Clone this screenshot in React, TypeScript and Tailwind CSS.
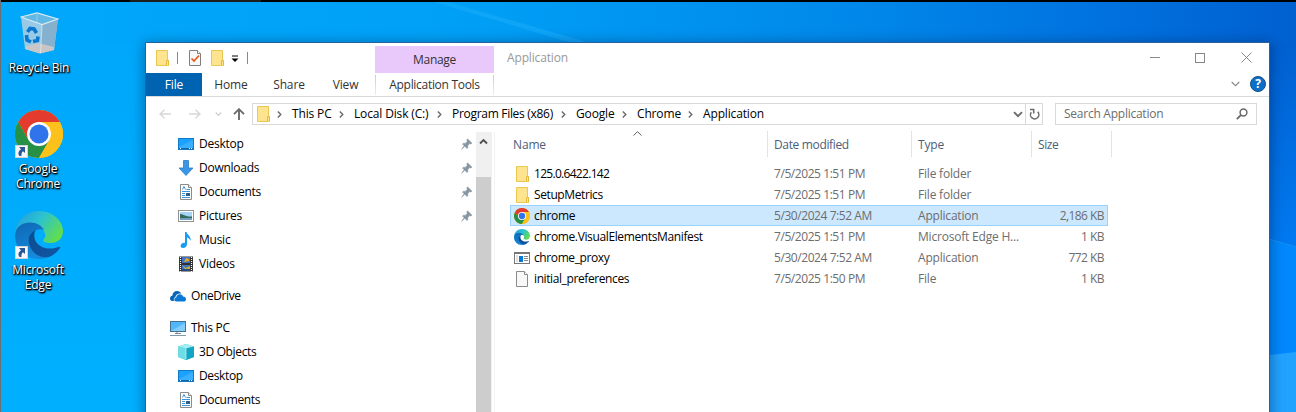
import React from 'react';

type P = { className?: string };

const Chrome = ({ className = '' }: P) => (
  <svg viewBox="0 0 48 48" className={className}>
    <circle cx="24" cy="24" r="24" fill="#fbbc09" />
    <path d="M24 0A24 24 0 0 1 44.8 12H24L13.6 30L3.2 12A24 24 0 0 1 24 0Z" fill="#e33b2e" />
    <path d="M3.2 12A24 24 0 0 0 24 48L34.4 30L24 24L13.6 30Z" fill="#269146" />
    <path d="M44.8 12H24L34.4 30L24 48A24 24 0 0 0 44.8 12Z" fill="#fcc21b" />
    <circle cx="24" cy="24" r="12" fill="#fff" />
    <circle cx="24" cy="24" r="9.5" fill="#2f74ea" />
  </svg>
);

const Edge = ({ className = '' }: P) => (
  <svg viewBox="0 0 48 48" className={className}>
    <defs>
      <linearGradient id="eg1" x1="0" y1="0.2" x2="1" y2="0.7">
        <stop offset="0" stopColor="#249fdf" />
        <stop offset=".45" stopColor="#2cc3d0" />
        <stop offset="1" stopColor="#65df45" />
      </linearGradient>
      <linearGradient id="eg2" x1="0" y1="0" x2=".4" y2="1">
        <stop offset="0" stopColor="#0d68b5" />
        <stop offset="1" stopColor="#1689dc" />
      </linearGradient>
      <linearGradient id="eg3" x1="0" y1="0" x2="1" y2="1">
        <stop offset="0" stopColor="#0b4c8f" />
        <stop offset="1" stopColor="#1257a5" />
      </linearGradient>
    </defs>
    <path d="M0 23C1 9 11 0 24 0C38 0 48 10 48 20C48 28 42 32 36 32C31 32 27 31 28.500 28.500C31 26 31 22 27 18C20 9 4 11 0 23Z" fill="url(#eg1)" />
    <path d="M0 24C1 15 8 11.500 15 11.500C22 11.500 27 15 29 19C20 16 13 24 16 33C19 42 28 45 35 45C31 47.500 27 48 24 48C10 48 0 38 0 24Z" fill="url(#eg2)" />
    <path d="M21 19C12 23 12 32 17 39C22 46 29 47 34 46C39 44 43 40 45 37C45.500 35.500 44.500 35.500 43 36C33 40 23 36 20 29C19 25 19 21 21 19Z" fill="url(#eg3)" />
  </svg>
);

const Bin = ({ className = '' }: P) => (
  <svg viewBox="0 0 39 42" className={className}>
    <path d="M1 5L5 37L20 41.500L34 38L38 7L22 13Z" fill="#a9cde2" fillOpacity=".9" />
    <path d="M22 13L38 7L34 38L20 41.500Z" fill="#85b1ce" />
    <path d="M5 35L18 31L34 35L34 38L20 41.500L5 37Z" fill="#c9c6c8" />
    <path d="M1 5L17 .8L38 7L22 12.500Z" fill="#62b8e5" stroke="#dbeaf2" strokeWidth="1.200" />
    <path d="M17 1V10" stroke="#8fcbe9" />
    <path d="M22 13L20.500 41" stroke="#dbe9f0" strokeWidth=".8" />
    <path d="M7.500 20L10 16.500L14 17L16.500 21" fill="none" stroke="#0878d0" strokeWidth="3.600" />
    <path d="M6.500 23L7 28L11 30" fill="none" stroke="#0878d0" strokeWidth="3.600" />
    <path d="M13 29.500L17.500 28.500L18 24.500" fill="none" stroke="#0878d0" strokeWidth="3.600" />
  </svg>
);

const Shortcut = () => (
  <svg viewBox="0 0 13 13" className="absolute bottom-0 left-0 h-[13px] w-[13px]">
    <rect x=".5" y=".5" width="12" height="12" fill="#f5f7fa" stroke="#d0d4d8" />
    <path d="M4 2H10V8L8 6.200C6.500 7.500 6.300 9 6.500 11H4.500C2.500 8.500 3.500 6 6 4.200Z" fill="#2a5699" />
  </svg>
);

const Folder = ({ className = 'h-4 w-4' }: P) => (
  <svg viewBox="0 0 16 16" className={className}>
    <path d="M2.500 .5H13.500V10.500H14.500V15.500H2.500Z" fill="#ffe48f" stroke="#ebc84f" />
    <path d="M12.500 15V10.500H14.500V15.500" fill="#ffe793" stroke="#e3bb3c" />
  </svg>
);

const DesktopI = () => (
  <svg viewBox="0 0 16 16" className="h-4 w-4">
    <rect x=".5" y="2.500" width="15" height="11" fill="#1ca2fb" stroke="#1279c6" />
    <path d="M1 11L15 4V12H1Z" fill="#39b0ff" />
    <path d="M1 12.500H15" stroke="#0d66aa" />
    <path d="M2 12.500H3M11 12.500H12M13 12.500H14" stroke="#fff" />
  </svg>
);
const DownI = () => (
  <svg viewBox="0 0 16 16" className="h-4 w-4">
    <path d="M5.500 .5H10.500V8H15L8 15.500L1 8H5.500Z" fill="#3b96e6" stroke="#267fca" strokeWidth=".8" />
  </svg>
);
const DocI = () => (
  <svg viewBox="0 0 16 16" className="h-4 w-4">
    <path d="M2.500 .5H10.500L13.500 3.500V15.500H2.500Z" fill="#fff" stroke="#8b8b8b" />
    <path d="M10.500 .5V3.500H13.500" fill="#eee" stroke="#8b8b8b" />
    <path d="M4.500 5.500L6 2.500L7.500 5.500M8.500 5.500H12M4 7.500H12M4 9.500H7M4 11.500H7M4 13.500H12" fill="none" stroke="#3b97d9" />
    <rect x="8" y="9" width="4" height="3" fill="#315f88" />
  </svg>
);
const PicI = () => (
  <svg viewBox="0 0 16 16" className="h-4 w-4">
    <rect x=".5" y="2.500" width="15" height="11" fill="#fff" stroke="#919191" />
    <rect x="2" y="4" width="12" height="8" fill="#a7d3f6" />
    <path d="M2 6C5 6 8 9 14 8.500V12H2Z" fill="#34695f" />
    <path d="M2 10H14V12H2Z" fill="#6e9ebb" />
  </svg>
);
const MusicI = () => (
  <svg viewBox="0 0 16 16" className="h-4 w-4">
    <path d="M7 0H8.500C9 3 13.500 4 12.500 9C12 7 10.500 6 9 5.500V12C9 14.500 7 16 5 16C3.300 16 2.300 14.800 2.700 13.300C3.200 11.500 5.200 10.500 7 11Z" fill="#169df0" />
  </svg>
);
const VideoI = () => (
  <svg viewBox="0 0 16 16" className="h-4 w-4">
    <rect x="1" y=".5" width="14" height="15" fill="#303030" />
    <path d="M2.500 1V16M13.500 1V16" stroke="#fff" strokeWidth="1.200" strokeDasharray="1 1" />
    <rect x="4" y="1" width="8" height="6" fill="#3e75c5" />
    <path d="M6 6L8 2L11 3V5Z" fill="#e7a51c" />
    <rect x="4" y="9" width="8" height="6" fill="#3e75c5" />
    <path d="M4 9L8 12L12 10V13H7Z" fill="#d0aa34" />
    <path d="M4 13H12V15H4Z" fill="#244c7f" />
  </svg>
);
const OneI = () => (
  <svg viewBox="0 0 16 16" className="h-4 w-4">
    <path d="M2.500 13C.8 13 0 11.800 0 10.500C0 9 1 8 2.300 7.800C2.500 5 4.500 3 7 3C9 3 10.500 4 11.300 5.500H10C7.500 5.500 5.800 7 5.400 9C3.800 9.500 3.300 11.500 4.200 13Z" fill="#0a64b4" />
    <path d="M6.500 13.500C4.800 13.500 4.300 12.500 4.300 11.600C4.300 10.400 5.200 9.600 6.300 9.500C6.300 7.500 7.800 6.200 9.700 6.200C11.300 6.200 12.500 7 13 8.500C14.800 8.500 16 9.700 16 11.200C16 12.600 15 13.500 13.500 13.500Z" fill="#0878d4" />
  </svg>
);
const PcI = () => (
  <svg viewBox="0 0 16 16" className="h-4 w-4">
    <rect x=".5" y="1.500" width="15" height="10" fill="#4fb7fa" stroke="#49718c" />
    <path d="M1 11L15 3V11Z" fill="#83cdfc" />
    <path d="M7 12V13.500M5 13.500H11" stroke="#789" />
    <path d="M0 15.500H16" stroke="#8499a7" />
  </svg>
);
const CubeI = () => (
  <svg viewBox="0 0 16 16" className="h-4 w-4">
    <path d="M0 2.500L8 0L16 2.500V13L8 16L0 13Z" fill="#35bdd2" />
    <path d="M0 2.500L8 0L16 2.500L8 4.500Z" fill="#a5eef2" />
    <path d="M0 2.500L8 4.500V16L0 13Z" fill="#6fdce4" />
    <path d="M8 4.500L16 2.500V13L8 16Z" fill="#12a5c4" />
    <path d="M8 4V15" stroke="#c6f6f7" strokeWidth=".7" />
  </svg>
);
const PinI = () => (
  <svg viewBox="0 0 12 12" className="mr-[3px] h-3 w-3">
    <path d="M6.500 .8L11 5.200L9.800 6L8.800 5.600L6.700 7.700L7 9.700L6 10.500L3.800 8.200L.5 11.500L3.100 7.700L1.500 6L2.300 5.200L4.300 5.400L6.300 3.200L5.800 2Z" fill="#8796a3" stroke="#8796a3" strokeWidth=".5" />
  </svg>
);
const ProxyI = () => (
  <svg viewBox="0 0 16 16" className="h-4 w-4">
    <rect x=".5" y="2.500" width="15" height="11" fill="#fff" stroke="#777" />
    <path d="M0 3H16" stroke="#777" strokeWidth="2" />
    <rect x="2" y="5" width="2" height="7" fill="#e1e1e1" />
    <rect x="5" y="6" width="4" height="6" fill="#0878d7" />
    <path d="M10 6.500H14M10 8.500H14M10 10.500H14" stroke="#888" />
  </svg>
);
const FileI = () => (
  <svg viewBox="0 0 16 16" className="h-4 w-4">
    <path d="M2.500 .5H10.500L13.500 3.500V15.500H2.500Z" fill="#f8f8f8" stroke="#8b8b8b" />
    <path d="M10.500 .5V3.500H13.500" fill="#fff" stroke="#8b8b8b" />
  </svg>
);
const CheckI = () => (
  <svg viewBox="0 0 16 16" className="h-4 w-4">
    <path d="M2.500 .5H10.500L13.500 3.500V15.500H2.500Z" fill="#f8f8f8" stroke="#808080" />
    <path d="M10.500 .5V3.500H13.500" fill="#fff" stroke="#808080" />
    <path d="M4.500 8.500L7 11L12 5.500" fill="none" stroke="#e8581c" strokeWidth="1.700" />
  </svg>
);

const Crumb = ({ text, w }: { text: string; w: string }) => (
  <span className={`flex shrink-0 items-center ${w}`}>
    <svg viewBox="0 0 5 7" className="mr-[10px] h-[7px] w-[5px] shrink-0"><path d="M.8 .5L3.800 3.500L.8 6.500" fill="none" stroke="#6b6b6b" strokeWidth="1.400" /></svg>
    {text}
  </span>
);

const crumbs = [
  ['This PC', 'w-[62px]'],
  ['Local Disk (C:)', 'w-[98px]'],
  ['Program Files (x86)', 'w-[124px] tracking-[-0.3px]'],
  ['Google', 'w-[61px]'],
  ['Chrome', 'w-[66px]'],
  ['Application', 'w-[90px]'],
];

const quick = [
  { n: 'Desktop', i: <DesktopI />, pin: true },
  { n: 'Downloads', i: <DownI />, pin: true },
  { n: 'Documents', i: <DocI />, pin: true },
  { n: 'Pictures', i: <PicI />, pin: true },
  { n: 'Music', i: <MusicI />, pin: false },
  { n: 'Videos', i: <VideoI />, pin: false },
];
const pc = [
  { n: '3D Objects', i: <CubeI /> },
  { n: 'Desktop', i: <DesktopI /> },
  { n: 'Documents', i: <DocI /> },
];

const files = [
  { n: '125.0.6422.142', k: 'tracking-[-0.7px]', d: '7/5/2025 1:51 PM', t: 'File folder', s: '', i: <Folder /> },
  { n: 'SetupMetrics', k: 'tracking-[-0.4px]', d: '7/5/2025 1:51 PM', t: 'File folder', s: '', i: <Folder /> },
  { n: 'chrome', k: 'tracking-[-0.3px]', d: '5/30/2024 7:52 AM', t: 'Application', s: '2,186 KB', i: <Chrome className="h-4 w-4" />, sel: true },
  { n: 'chrome.VisualElementsManifest', k: 'tracking-[-0.37px]', d: '7/5/2025 1:51 PM', t: 'Microsoft Edge H...', s: '1 KB', i: <Edge className="h-4 w-4" /> },
  { n: 'chrome_proxy', k: 'tracking-[-0.4px]', d: '5/30/2024 7:52 AM', t: 'Application', s: '772 KB', i: <ProxyI /> },
  { n: 'initial_preferences', k: 'tracking-[-0.4px]', d: '7/5/2025 1:50 PM', t: 'File', s: '1 KB', i: <FileI /> },
];

const Wallpaper = () => (
  <svg viewBox="0 0 1296 412" className="absolute inset-0 h-[412px] w-[1296px]">
    <defs>
      <linearGradient id="sky" x1="0" x2="1" y1="0" y2="0">
        <stop offset="0" stopColor="#00a8fb" />
        <stop offset=".35" stopColor="#00a0f6" />
        <stop offset=".65" stopColor="#0089ea" />
        <stop offset=".85" stopColor="#0072df" />
        <stop offset="1" stopColor="#0060d0" />
      </linearGradient>
      <linearGradient id="left" x1="0" x2="0" y1="0" y2="1">
        <stop offset="0" stopColor="#00a7fa" />
        <stop offset="1" stopColor="#00b0ff" />
      </linearGradient>
      <linearGradient id="right" x1="0" x2="0" y1="0" y2="1">
        <stop offset="0" stopColor="#0060d0" />
        <stop offset="1" stopColor="#007af1" />
      </linearGradient>
      <linearGradient id="beam" x1="0" x2="1" y1="0" y2="0">
        <stop offset="0" stopColor="#1eb0fb" stopOpacity=".4" />
        <stop offset="1" stopColor="#1eaefb" stopOpacity=".5" />
      </linearGradient>
    </defs>
    <rect width="1296" height="412" fill="url(#sky)" />
    <rect y="43" width="146" height="369" fill="url(#left)" />
    <rect x="1269" y="43" width="27" height="205" fill="url(#right)" />
    <path d="M434 2H448L590 43H572Z" fill="url(#beam)" />
    <path d="M1269 239L1296 247V412H1269Z" fill="#0088fc" />
    <path d="M1269 239L1296 247" stroke="#1691f8" />
    <path d="M1269 355L1296 352V412H1269Z" fill="#22a2ff" />
    <rect width="1296" height="2" fill="#000" />
    <rect x="130" width="131" height="2" fill="#1d1d1d" />
    <rect width="1" height="412" fill="#6b6f73" />
  </svg>
);

const label = 'text-center text-[12px] leading-[15px] text-white [text-shadow:1px_1px_2px_#000,0_1px_2px_#000,1px_1px_1px_#000]';

export default function App() {
  return (
    <div className="relative h-[412px] w-[1296px] overflow-hidden font-['Open_Sans','Noto_Sans',sans-serif] text-[12px] leading-[16px] tracking-[-0.15px] whitespace-nowrap text-black">
      <Wallpaper />
      <div className="relative flex w-[78px] flex-col items-center pt-[12px]">
        <Bin className="h-[42px] w-[39px]" />
        <div className={`${label} mt-[6px] tracking-[-0.2px]`}>Recycle Bin</div>
        <div className="relative mt-[35px] h-12 w-12"><Chrome className="h-12 w-12" /><Shortcut /></div>
        <div className={`${label} mt-[3px] pr-[2px]`}>Google<br />Chrome</div>
        <div className="relative mt-[20px] h-12 w-12"><Edge className="h-12 w-12" /><Shortcut /></div>
        <div className={`${label} mt-[3px] pr-[2px]`}>Microsoft<br />Edge</div>
      </div>

      <div className="absolute top-[42px] left-[145px] flex h-[380px] w-[1125px] flex-col border border-[#28619a] bg-white shadow-[0_2px_12px_1px_rgba(0,20,60,0.4)]">
        <div className="flex h-[53px] shrink-0">
          <div className="flex w-[229px] flex-col">
            <div className="flex h-[30px] items-center pl-[8px]">
              <Folder />
              <div className="ml-[7px] h-3 w-px bg-[#888]" />
              <div className="ml-[9px]"><CheckI /></div>
              <div className="ml-[6px]"><Folder /></div>
              <svg viewBox="0 0 8 8" className="mt-[2px] ml-[6px] h-2 w-2"><path d="M1 1H7" stroke="#000" /><path d="M.5 3.500H7.500L4 7Z" fill="#000" /></svg>
              <div className="ml-[8px] h-3 w-px bg-[#888]" />
            </div>
            <div className="flex h-[23px] items-center text-[#333]">
              <div className="flex h-[23px] w-[56px] items-center justify-center bg-[#0063b1] text-white">File</div>
              <div className="w-[58px] text-center">Home</div>
              <div className="w-[58px] text-center">Share</div>
              <div className="w-[55px] text-center">View</div>
            </div>
          </div>
          <div className="w-[119px] pt-[3px] text-center tracking-[-0.3px] text-[#333]">
            <div className="flex h-[27px] items-center justify-center bg-[#e9c9fc]">Manage</div>
            <div className="flex h-[23px] items-center justify-between">
              <div className="h-[20px] w-px bg-linear-to-b from-[#ccc] to-[#eee]" />
              <span>Application Tools</span>
              <div className="h-[20px] w-px bg-linear-to-b from-[#ccc] to-[#eee]" />
            </div>
          </div>
          <div className="flex flex-1 justify-between pt-[7px] pl-[13px]">
            <span className="text-[#999]">Application</span>
            <div className="flex w-[123px] flex-col pt-[2px]">
              <div className="flex h-[11px] items-center">
                <div className="ml-[4px] h-px w-[10px] bg-[#888]" />
                <div className="ml-[35px] h-[10px] w-[10px] border border-[#888]" />
                <svg viewBox="0 0 11 11" className="ml-[36px] h-[11px] w-[11px]"><path d="M.5 .5L10.500 10.500M10.500 .5L.5 10.500" stroke="#888" /></svg>
              </div>
              <div className="mt-[13px] flex items-center">
                <svg viewBox="0 0 9 6" className="ml-[85px] h-[6px] w-[9px]"><path d="M.7 1L4.500 4.700L8.300 1" fill="none" stroke="#888" strokeWidth="1.100" /></svg>
                <div className="ml-[10px] flex h-4 w-4 shrink-0 items-center justify-center rounded-full border border-[#154f83] bg-[#0a6fc9] text-[12px] font-bold text-white">?</div>
              </div>
            </div>
          </div>
        </div>

        <div className="flex h-[35px] shrink-0 border-t border-[#d9dadb] pt-[6px]">
          <div className="flex h-[22px] w-[106px] items-center pl-[13px]">
            <svg viewBox="0 0 12 10" className="h-[10px] w-3"><path d="M12 5H1M5.500 .7L1 5L5.500 9.300" fill="none" stroke="#d7d7d7" strokeWidth="1.400" /></svg>
            <svg viewBox="0 0 12 10" className="ml-[18px] h-[10px] w-3"><path d="M0 5H11M6.500 .7L11 5L6.500 9.300" fill="none" stroke="#d7d7d7" strokeWidth="1.400" /></svg>
            <svg viewBox="0 0 7 4" className="ml-[14px] h-1 w-[7px]"><path d="M.7 .5L3.500 3.300L6.300 .5" fill="none" stroke="#ccc" strokeWidth="1.200" /></svg>
            <svg viewBox="0 0 12 12" className="ml-[11px] h-3 w-3"><path d="M6 12V1.500M1 6.200L6 1.200L11 6.200" fill="none" stroke="#6b6b6b" strokeWidth="1.900" /></svg>
          </div>
          <div className="flex h-[22px] w-[791px] items-center border border-[#d9d9d9] pl-[2px]">
            <Folder />
            <div className="ml-[6px] flex flex-1">
              {crumbs.map(([t, w]) => <Crumb key={t} text={t} w={w} />)}
            </div>
            <svg viewBox="0 0 10 7" className="mr-[2px] h-[7px] w-[10px]"><path d="M1 1.200L5 5.200L9 1.200" fill="none" stroke="#6b6b6b" strokeWidth="1.900" /></svg>
            <div className="flex h-5 w-[17px] items-center justify-center border-l border-[#d9d9d9]">
              <svg viewBox="0 0 11 12" className="h-3 w-[11px]"><path d="M8.700 3.800A4.200 4.200 0 1 1 2.300 4.200M1 1.500H4.700V5.500" fill="none" stroke="#6b6b6b" strokeWidth="1.500" /></svg>
            </div>
          </div>
          <div className="ml-[12px] flex h-[22px] w-[202px] items-center justify-between border border-[#d9d9d9] pr-[8px] pl-[8px] text-[#6d6d6d]">
            <span className="tracking-[-0.25px]">Search Application</span>
            <svg viewBox="0 0 12 12" className="h-3 w-3"><circle cx="7.500" cy="4.500" r="3.400" fill="none" stroke="#6b6b6b" strokeWidth="1.500" /><path d="M5 7L.8 11.200" stroke="#6b6b6b" strokeWidth="1.800" /></svg>
          </div>
        </div>

        <div className="flex min-h-0 flex-1">
          <div className="w-[330px] overflow-hidden pt-px">
            {quick.map((r) => (
              <div key={r.n} className="flex h-6 items-center pl-8">
                {r.i}<span className="ml-[5px] flex-1 tracking-[-0.25px]">{r.n}</span>{r.pin && <PinI />}
              </div>
            ))}
            <div className="mt-2 flex h-6 items-center pl-6"><OneI /><span className="ml-[5px] tracking-[-0.4px]">OneDrive</span></div>
            <div className="mt-2 flex h-6 items-center pl-6"><PcI /><span className="ml-[5px] tracking-[-0.25px]">This PC</span></div>
            {pc.map((r) => (
              <div key={r.n} className="flex h-6 items-center pl-8">{r.i}<span className="ml-[5px] tracking-[-0.35px]">{r.n}</span></div>
            ))}
          </div>
          <div className="mt-px flex w-4 flex-col bg-[#f0f0f0]">
            <div className="flex h-[45px] justify-center pr-px pt-[6px]">
              <svg viewBox="0 0 9 7" className="h-[7px] w-[9px]"><path d="M1 5.500L4.500 2L8 5.500" fill="none" stroke="#505050" strokeWidth="1.900" /></svg>
            </div>
            <div className="w-[15px] flex-1 bg-[#cdcdcd]" />
          </div>
          <div className="mt-px ml-[2px] w-px bg-[#f2f2f2]" />
          <div className="flex flex-1 flex-col pl-[15px]">
            <div className="flex h-[26px] shrink-0 text-[#4c607a]">
              <div className="relative w-[258px] border-r border-[#e3e3e3] pt-[6px] pl-[3px]">
                Name
                <svg viewBox="0 0 9 5" className="absolute top-0 left-[123px] h-[5px] w-[9px]"><path d="M.5 4.500L4.500 .7L8.500 4.500" fill="none" stroke="#606060" /></svg>
              </div>
              <div className="w-[144px] border-r border-[#e3e3e3] pt-[6px] pl-[6px] tracking-[-0.35px]">Date modified</div>
              <div className="w-[120px] border-r border-[#e3e3e3] pt-[6px] pl-[6px]">Type</div>
              <div className="w-[80px] border-r border-[#e3e3e3] pt-[6px] pl-[6px] tracking-[-0.4px]">Size</div>
            </div>
            <div className="mt-[6px] flex flex-col">
              {files.map((f) => (
                <div key={f.n} className={`flex h-[21px] w-[598px] items-center text-[#6d6d6d] ${f.sel ? 'bg-[#cce8ff] outline outline-1 -outline-offset-1 outline-[#99d1ff]' : ''}`}>
                  <div className="flex w-[264px] items-center pl-[4px] text-black">{f.i}<span className={`ml-[4px] ${f.k}`}>{f.n}</span></div>
                  <div className="w-[144px] tracking-[-0.43px]">{f.d}</div>
                  <div className="w-[110px] tracking-[-0.2px]">{f.t}</div>
                  <div className="flex-1 pr-[4px] text-right tracking-[-0.55px]">{f.s}</div>
                </div>
              ))}
            </div>
          </div>
        </div>
      </div>
    </div>
  );
}
